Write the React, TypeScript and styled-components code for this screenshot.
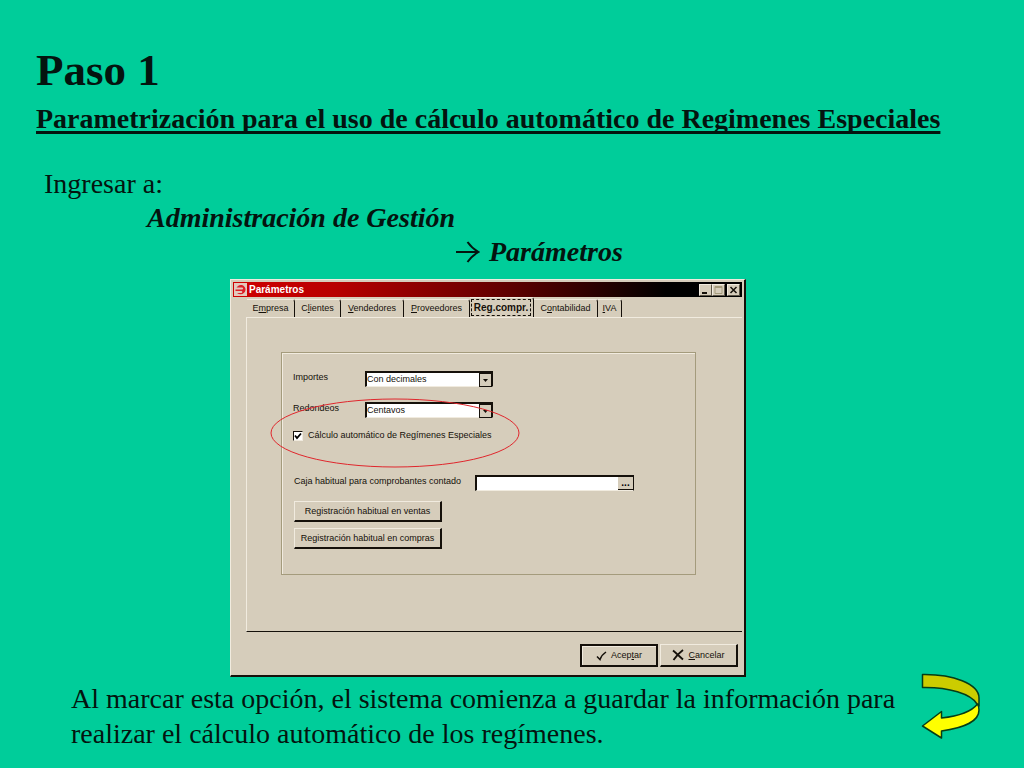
import React, { useState } from "react";
import styled, { createGlobalStyle, css } from "styled-components";

const face = "#d6cdbb";
const light = "#f1ebdf";
const olive = "#a49b7c";
const ink = "#15100a";

const GlobalStyle = createGlobalStyle`
  *, *::before, *::after { box-sizing: border-box; }
  body {
    margin: 0;
    background: #00cd9a;
    color: #04140f;
    font-family: "Liberation Serif", "Times New Roman", serif;
  }
`;

const Slide = styled.main`
  min-height: 100vh;
  padding: 44px 36px 16px;
`;

const Title = styled.h1`
  margin: 0;
  font-size: 45px;
  line-height: 52px;
`;

const Subtitle = styled.h2`
  margin: 7px 0 32px;
  font-size: 28px;
  line-height: 32px;
  text-decoration: underline;
  text-decoration-thickness: 3px;
  text-underline-offset: 3px;
  text-decoration-skip-ink: none;
`;

const Path = styled.div`
  padding-left: 8px;
  font-size: 28px;
  line-height: 34px;
`;

const Step = styled.p<{ $indent?: number }>`
  display: flex;
  align-items: center;
  gap: 9px;
  margin: 0;
  padding-left: ${(p) => p.$indent ?? 0}px;
`;

const Strong = styled.em`
  font-weight: bold;
`;

const Dialog = styled.section`
  width: 516px;
  max-width: 100%;
  margin: 10px 0 4px 194px;
  padding: 2px;
  background: ${face};
  border: 1px solid ${light};
  border-right: 2px solid ${ink};
  border-bottom: 2px solid ${ink};
  color: ${ink};
  font-family: "Liberation Sans", Arial, sans-serif;
  font-size: 9px;
  line-height: 13px;
`;

const TitleBar = styled.header`
  display: flex;
  align-items: center;
  gap: 2px;
  height: 15px;
  padding: 0 2px 0 1px;
  background: linear-gradient(90deg, #cf0000 0%, #b80000 20%, #5c0000 55%, #000 85%);
  color: #fff;
`;

const Caption = styled.h3`
  flex: 1;
  margin: 0;
  font-size: 10px;
`;

const WindowButton = styled.button`
  display: flex;
  width: 13px;
  height: 12px;
  padding: 0;
  background: ${face};
  border: 1px solid ${light};
  border-right-color: #5b5446;
  border-bottom-color: #5b5446;
`;

const WindowButtons = styled.div`
  display: flex;

  ${WindowButton}:last-child {
    margin-left: 2px;
  }
`;

const TabList = styled.div`
  display: flex;
  align-items: flex-end;
  height: 20px;
  margin-left: 14px;
`;

const Tab = styled.button<{ $width: number; $active: boolean }>`
  flex: 0 0 ${(p) => p.$width}px;
  height: 18px;
  padding: 0;
  background: ${face};
  border: 0 solid ${ink};
  border-top: 1px solid ${light};
  border-right-width: 1px;
  border-top-right-radius: 3px;
  color: inherit;
  font: inherit;
  white-space: nowrap;
  ${(p) =>
    p.$active &&
    css`
      height: 20px;
      padding: 1px;
      font-size: 10px;
      font-weight: bold;
    `}
`;

const Focus = styled.span<{ $active: boolean }>`
  display: block;
  ${(p) =>
    p.$active &&
    css`
      margin-right: 1px;
      padding: 1px 0;
      border: 1px dashed ${ink};
    `}
`;

const Sheet = styled.div`
  height: 315px;
  margin-left: 13px;
  padding: 34px 46px 0 34px;
  border: 1px solid ${light};
  border-right: 0;
  border-bottom-color: ${ink};
`;

const Group = styled.form`
  position: relative;
  height: 223px;
  padding: 18px 11px;
  border: 1px solid ${olive};
  box-shadow: inset 1px 1px 0 ${light};
`;

const Fields = styled.div`
  display: grid;
  grid-template-columns: 72px 128px;
  grid-template-rows: 31px 27px;
  align-items: start;
`;

const Picker = styled.div`
  display: flex;
  height: 16px;
  background: #fff;
  border: 1px solid ${ink};
  border-top-width: 2px;
  border-left-width: 2px;
  border-bottom-color: ${light};
`;

const Select = styled.select`
  flex: 1;
  appearance: none;
  min-width: 0;
  padding: 0;
  background: transparent;
  border: 0;
  color: inherit;
  font: inherit;
`;

const DropMark = styled.span`
  display: flex;
  align-items: center;
  justify-content: center;
  width: 13px;
  height: 14px;
  background: ${face};
  border: 1px solid ${ink};
  pointer-events: none;
`;

const CheckLabel = styled.label`
  display: flex;
  align-items: center;
  gap: 5px;
  width: max-content;
`;

const Check = styled.input`
  appearance: none;
  width: 10px;
  height: 10px;
  margin: 0;
  background: #fff;
  border: 1px solid ${light};
  border-top-color: ${ink};
  border-left-color: ${ink};

  &:checked {
    background: #fff
      url("data:image/svg+xml,%3Csvg xmlns='http://www.w3.org/2000/svg' viewBox='0 0 8 8'%3E%3Cpath d='M1 3.5 3 6 7 1.5' fill='none' stroke='black' stroke-width='1.8'/%3E%3C/svg%3E");
  }
`;

const CashRow = styled.div`
  display: grid;
  grid-template-columns: 181px 159px;
  margin: 33px 0 10px 1px;
`;

const TextField = styled.input`
  flex: 1;
  min-width: 0;
  padding: 0 2px;
  background: #fff;
  border: 0;
  font: inherit;
`;

const MoreButton = styled.button`
  width: 15px;
  padding: 0;
  background: ${face};
  border: 0;
  border-bottom: 1px solid ${ink};
  font: bold 10px/8px "Liberation Sans", Arial, sans-serif;
`;

const Button = styled.button<{ $default?: boolean }>`
  display: flex;
  align-items: center;
  justify-content: center;
  gap: 4px;
  padding: 0;
  background: ${face};
  border: 1px solid ${light};
  border-right: 2px solid ${ink};
  border-bottom: 2px solid ${ink};
  color: inherit;
  font: inherit;
  ${(p) =>
    p.$default &&
    css`
      border: 2px solid ${ink};
      box-shadow: inset 1px 1px 0 ${light};
    `}
`;

const Actions = styled.div`
  display: grid;
  grid-template-columns: 148px;
  grid-auto-rows: 21px;
  gap: 6px;
  margin-left: 1px;
`;

const DialogFooter = styled.footer`
  display: grid;
  grid-template-columns: repeat(2, 78px);
  grid-auto-rows: 23px;
  justify-content: end;
  gap: 2px;
  padding: 12px 4px 6px 0;
`;

const Highlight = styled.svg`
  position: absolute;
  top: 45px;
  left: -12px;
  pointer-events: none;
`;

const Note = styled.footer`
  display: flex;
  justify-content: space-between;
  align-items: flex-start;
  padding: 0 7px 0 35px;
`;

const NoteText = styled.p`
  flex: 0 1 848px;
  margin: 0;
  font-size: 28px;
  line-height: 35px;
`;

const NextLink = styled.a`
  display: block;
  height: 66px;
  margin-top: -8px;
`;

type TabInfo = { before: string; key: string; after: string; width: number };

const tabs: TabInfo[] = [
  { before: "E", key: "m", after: "presa", width: 48 },
  { before: "C", key: "l", after: "ientes", width: 46 },
  { before: "", key: "V", after: "endedores", width: 63 },
  { before: "", key: "P", after: "roveedores", width: 66 },
  { before: "Reg.compr.", key: "", after: "", width: 64 },
  { before: "C", key: "o", after: "ntabilidad", width: 64 },
  { before: "", key: "I", after: "VA", width: 24 },
];

function Dropdown({ id, options }: { id: string; options: string[] }) {
  return (
    <Picker>
      <Select id={id}>
        {options.map((o) => (
          <option key={o}>{o}</option>
        ))}
      </Select>
      <DropMark>
        <svg width="5" height="3" viewBox="0 0 5 3" aria-hidden="true">
          <path d="M0 0h5L2.5 3z" fill={ink} />
        </svg>
      </DropMark>
    </Picker>
  );
}

export default function App() {
  const [active, setActive] = useState(4);
  const [auto, setAuto] = useState(true);

  return (
    <Slide>
      <GlobalStyle />
      <Title>Paso 1</Title>
      <Subtitle>Parametrización para el uso de cálculo automático de Regimenes Especiales</Subtitle>
      <Path>
        <Step>Ingresar a:</Step>
        <Step $indent={103}>
          <Strong>Administración de Gestión</Strong>
        </Step>
        <Step $indent={412}>
          <svg width="24" height="22" viewBox="0 0 24 22" aria-hidden="true">
            <path d="M0 11H22M11.500 1C14 4.500 18 8.500 22.500 11C18 13.500 14 17.500 11.500 21" fill="none" stroke="#04140f" strokeWidth="2" />
          </svg>
          <Strong>Parámetros</Strong>
        </Step>
      </Path>

      <Dialog aria-label="Parámetros">
        <TitleBar>
          <svg width="13" height="13" viewBox="0 0 13 13" aria-hidden="true">
            <path d="M0 0h13v13H0z" fill="#e3c9bd" />
            <path d="M4 3C7 .5 12 3 11.500 7C11 11 6.500 12.500 3 10H7.500C8.500 10 8.500 8 7.500 8H1.500V6.500H8C9.500 6.500 9.500 4.500 8 4.500H2.500Z" fill="#dc2028" />
          </svg>
          <Caption>Parámetros</Caption>
          <WindowButtons>
            <WindowButton aria-label="Minimizar">
              <svg width="11" height="10" viewBox="0 0 11 10">
                <path d="M2 8h5" stroke={ink} strokeWidth="2" />
              </svg>
            </WindowButton>
            <WindowButton aria-label="Maximizar" disabled>
              <svg width="11" height="10" viewBox="0 0 11 10">
                <path d="M2 1.500h7v7H2zM2 2.500h7" fill="none" stroke={olive} />
              </svg>
            </WindowButton>
            <WindowButton aria-label="Cerrar">
              <svg width="11" height="10" viewBox="0 0 11 10">
                <path d="M2.500 2L8.500 8M8.500 2L2.500 8" stroke={ink} strokeWidth="1.500" />
              </svg>
            </WindowButton>
          </WindowButtons>
        </TitleBar>

        <TabList role="tablist">
          {tabs.map((t, i) => (
            <Tab
              key={i}
              type="button"
              role="tab"
              aria-selected={i === active}
              $active={i === active}
              $width={t.width}
              onClick={() => setActive(i)}
            >
              <Focus $active={i === active}>
                {t.before}
                {t.key && <u>{t.key}</u>}
                {t.after}
              </Focus>
            </Tab>
          ))}
        </TabList>

        <Sheet role="tabpanel">
          <Group>
            <Fields>
              <label htmlFor="importes">Importes</label>
              <Dropdown id="importes" options={["Con decimales", "Sin decimales"]} />
              <label htmlFor="redondeos">Redondeos</label>
              <Dropdown id="redondeos" options={["Centavos", "Pesos"]} />
            </Fields>
            <CheckLabel>
              <Check type="checkbox" checked={auto} onChange={(e) => setAuto(e.target.checked)} />
              Cálculo automático de Regímenes Especiales
            </CheckLabel>
            <CashRow>
              <label htmlFor="caja">Caja habitual para comprobantes contado</label>
              <Picker>
                <TextField id="caja" type="text" />
                <MoreButton type="button">...</MoreButton>
              </Picker>
            </CashRow>
            <Actions>
              <Button type="button">Registración habitual en ventas</Button>
              <Button type="button">Registración habitual en compras</Button>
            </Actions>
            <Highlight width="250" height="70" viewBox="0 0 250 70" aria-hidden="true">
              <ellipse cx="125" cy="35" rx="124" ry="34" fill="none" stroke="#e0262c" strokeWidth="1" />
            </Highlight>
          </Group>
        </Sheet>

        <DialogFooter>
          <Button type="button" $default>
            <svg width="11" height="10" viewBox="0 0 11 10" aria-hidden="true">
              <path d="M1 5.500L4 8.500C5 5.500 7 3 10 1" fill="none" stroke={ink} strokeWidth="1.500" />
            </svg>
            <span>
              Acep<u>t</u>ar
            </span>
          </Button>
          <Button type="button">
            <svg width="12" height="12" viewBox="0 0 12 12" aria-hidden="true">
              <path d="M1 1.500C4 4 7 7 11 10.500M11 1C7 4 4 7 1.500 11" fill="none" stroke={ink} strokeWidth="1.800" />
            </svg>
            <span>
              <u>C</u>ancelar
            </span>
          </Button>
        </DialogFooter>
      </Dialog>

      <Note>
        <NoteText>
          Al marcar esta opción, el sistema comienza a guardar la información para realizar el cálculo
          automático de los regímenes.
        </NoteText>
        <NextLink href="#siguiente" aria-label="Siguiente">
          <svg width="60" height="66" viewBox="0 0 60 66">
            <path d="M1.500 1.500C32 1 58 11 58 25V33C58 33 57.500 31 56 31C50 21 28 14 1.500 14.500Z" fill="#cccc00" stroke="#063d16" strokeWidth="1.500" strokeLinejoin="round" />
            <path d="M56.500 31C51 38 39 43 20.500 45V38.500L1.500 53L20.500 65V58C43 55 58 48 58 37C58 34 57.500 32.500 56.500 31Z" fill="#ffff00" stroke="#063d16" strokeWidth="1.500" strokeLinejoin="round" />
          </svg>
        </NextLink>
      </Note>
    </Slide>
  );
}
